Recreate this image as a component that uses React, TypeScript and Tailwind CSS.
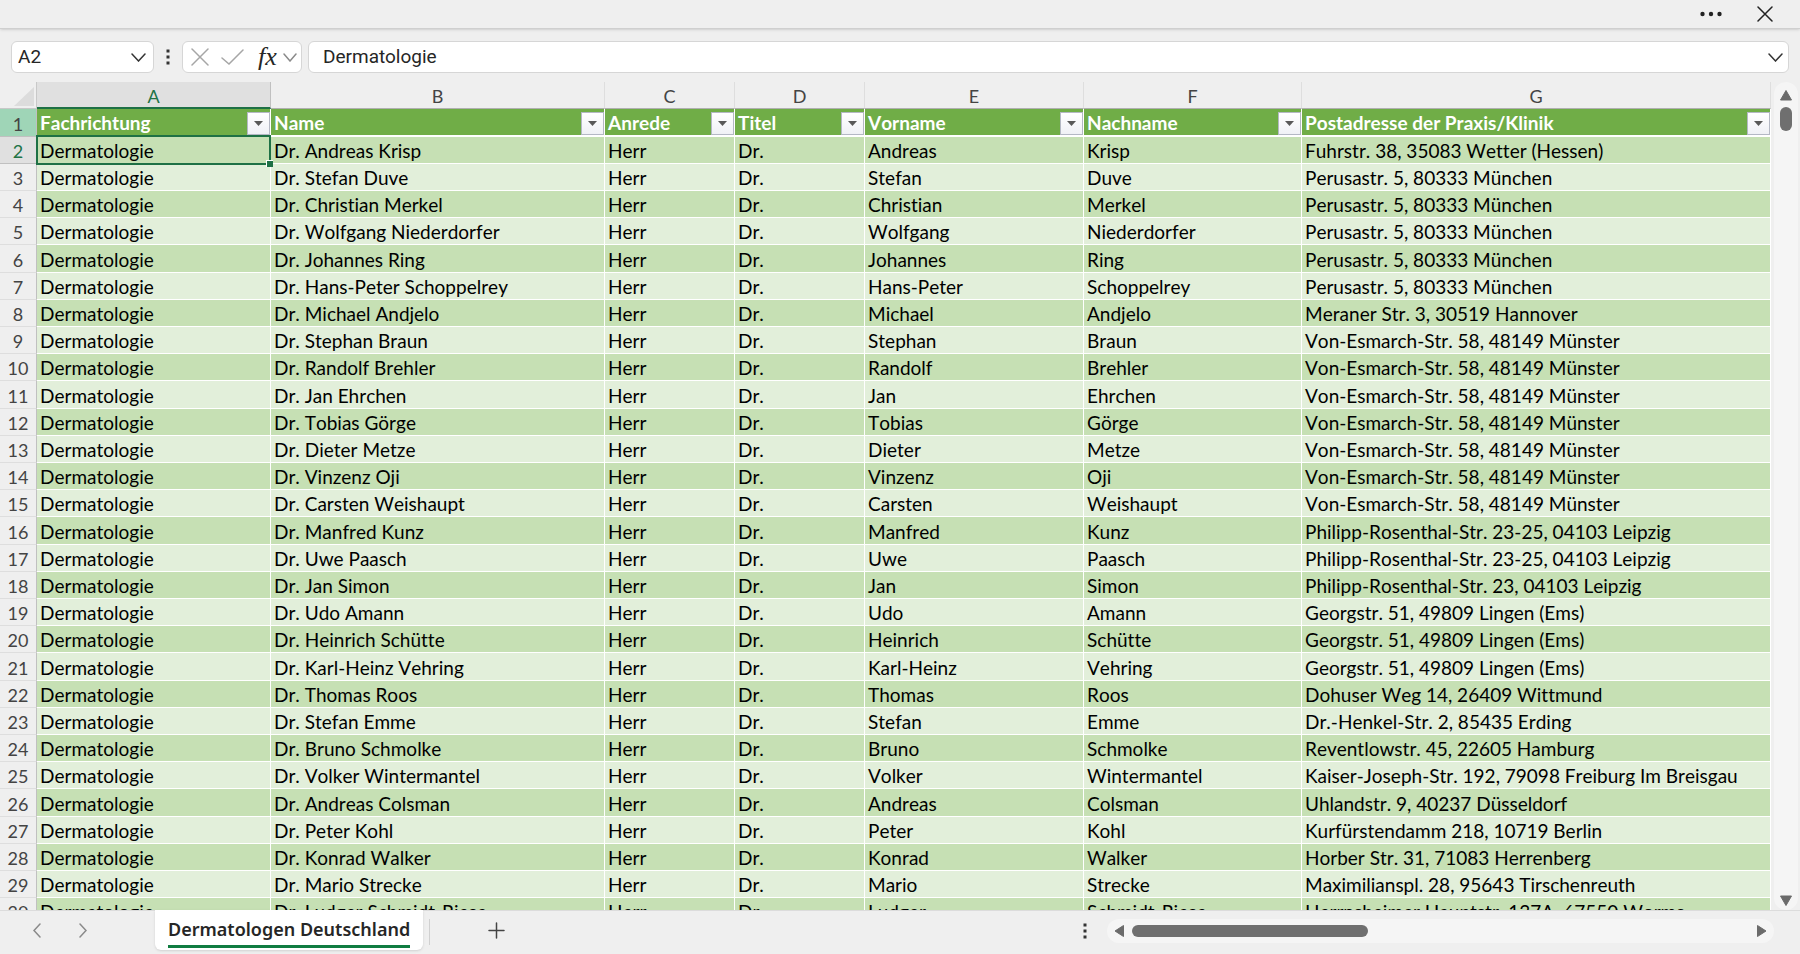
type Row = [title: string, first: string, last: string, address: string];

const HEADERS = ['Fachrichtung', 'Name', 'Anrede', 'Titel', 'Vorname', 'Nachname', 'Postadresse der Praxis/Klinik'];
const LETTERS = ['A', 'B', 'C', 'D', 'E', 'F', 'G'];

const ROWS: Row[] = [
  ['Dr.', 'Andreas', 'Krisp', 'Fuhrstr. 38, 35083 Wetter (Hessen)'],
  ['Dr.', 'Stefan', 'Duve', 'Perusastr. 5, 80333 München'],
  ['Dr.', 'Christian', 'Merkel', 'Perusastr. 5, 80333 München'],
  ['Dr.', 'Wolfgang', 'Niederdorfer', 'Perusastr. 5, 80333 München'],
  ['Dr.', 'Johannes', 'Ring', 'Perusastr. 5, 80333 München'],
  ['Dr.', 'Hans-Peter', 'Schoppelrey', 'Perusastr. 5, 80333 München'],
  ['Dr.', 'Michael', 'Andjelo', 'Meraner Str. 3, 30519 Hannover'],
  ['Dr.', 'Stephan', 'Braun', 'Von-Esmarch-Str. 58, 48149 Münster'],
  ['Dr.', 'Randolf', 'Brehler', 'Von-Esmarch-Str. 58, 48149 Münster'],
  ['Dr.', 'Jan', 'Ehrchen', 'Von-Esmarch-Str. 58, 48149 Münster'],
  ['Dr.', 'Tobias', 'Görge', 'Von-Esmarch-Str. 58, 48149 Münster'],
  ['Dr.', 'Dieter', 'Metze', 'Von-Esmarch-Str. 58, 48149 Münster'],
  ['Dr.', 'Vinzenz', 'Oji', 'Von-Esmarch-Str. 58, 48149 Münster'],
  ['Dr.', 'Carsten', 'Weishaupt', 'Von-Esmarch-Str. 58, 48149 Münster'],
  ['Dr.', 'Manfred', 'Kunz', 'Philipp-Rosenthal-Str. 23-25, 04103 Leipzig'],
  ['Dr.', 'Uwe', 'Paasch', 'Philipp-Rosenthal-Str. 23-25, 04103 Leipzig'],
  ['Dr.', 'Jan', 'Simon', 'Philipp-Rosenthal-Str. 23, 04103 Leipzig'],
  ['Dr.', 'Udo', 'Amann', 'Georgstr. 51, 49809 Lingen (Ems)'],
  ['Dr.', 'Heinrich', 'Schütte', 'Georgstr. 51, 49809 Lingen (Ems)'],
  ['Dr.', 'Karl-Heinz', 'Vehring', 'Georgstr. 51, 49809 Lingen (Ems)'],
  ['Dr.', 'Thomas', 'Roos', 'Dohuser Weg 14, 26409 Wittmund'],
  ['Dr.', 'Stefan', 'Emme', 'Dr.-Henkel-Str. 2, 85435 Erding'],
  ['Dr.', 'Bruno', 'Schmolke', 'Reventlowstr. 45, 22605 Hamburg'],
  ['Dr.', 'Volker', 'Wintermantel', 'Kaiser-Joseph-Str. 192, 79098 Freiburg Im Breisgau'],
  ['Dr.', 'Andreas', 'Colsman', 'Uhlandstr. 9, 40237 Düsseldorf'],
  ['Dr.', 'Peter', 'Kohl', 'Kurfürstendamm 218, 10719 Berlin'],
  ['Dr.', 'Konrad', 'Walker', 'Horber Str. 31, 71083 Herrenberg'],
  ['Dr.', 'Mario', 'Strecke', 'Maximilianspl. 28, 95643 Tirschenreuth'],
  ['Dr.', 'Ludger', 'Schmidt-Riese', 'Herrnsheimer Hauptstr. 137A, 67550 Worms'],
];

interface LineIconProps {
  d: string;
  w: number;
  h: number;
  color?: string;
}

const LineIcon = ({ d, w, h, color = '#333333' }: LineIconProps) => (
  <svg width={w} height={h} viewBox={`0 0 ${w} ${h}`} fill="none" stroke={color} strokeWidth="1.5" strokeLinecap="round" aria-hidden="true">
    <path d={d} />
  </svg>
);

const CHEVRON_DOWN = 'M1 1l6.5 7L14 1';

const Dots = () => (
  <svg width="4" height="16" viewBox="0 0 4 16" fill="#333333" aria-hidden="true">
    <rect x="0.5" y="0.5" width="3" height="3" />
    <rect x="0.5" y="6.5" width="3" height="3" />
    <rect x="0.5" y="12.5" width="3" height="3" />
  </svg>
);

const Triangle = ({ points }: { points: string }) => (
  <svg width="12" height="12" viewBox="0 0 12 12" aria-hidden="true">
    <polygon points={points} fill="#6b6b6b" stroke="#6b6b6b" strokeLinejoin="round" />
  </svg>
);

const TitleBar = () => (
  <header className="flex h-[29px] shrink-0 items-center justify-end gap-[35px] border-b border-[#cfcfcf] pr-[27px] shadow-sm">
    <button type="button" aria-label="More options">
      <svg width="22" height="6" viewBox="0 0 22 6" fill="#222222">
        <circle cx="2.5" cy="3" r="2.2" />
        <circle cx="11" cy="3" r="2.2" />
        <circle cx="19.5" cy="3" r="2.2" />
      </svg>
    </button>
    <button type="button" aria-label="Close">
      <LineIcon d="M1 1l14 14M15 1L1 15" w={16} h={16} color="#222222" />
    </button>
  </header>
);

const FormulaBar = () => (
  <div className="flex h-[53px] shrink-0 items-start pt-3 pr-[11px] pl-[11px] font-['Roboto',sans-serif] text-[19px] text-[#262626]">
    <div className="flex h-8 w-[143px] items-center rounded-md border border-[#d6d6d6] bg-white pr-[7px] pl-1.5">
      <input aria-label="Name box" defaultValue="A2" className="w-full min-w-0 outline-none" />
      <button type="button" aria-label="Open name list">
        <LineIcon d={CHEVRON_DOWN} w={15} h={9} />
      </button>
    </div>
    <div className="flex h-8 w-7 items-center justify-center">
      <Dots />
    </div>
    <div className="flex h-8 w-[120px] items-center rounded-md border border-[#d6d6d6] bg-white pr-1 pl-2">
      <button type="button" aria-label="Cancel">
        <LineIcon d="M1 1l16 16M17 1L1 17" w={18} h={18} color="#a6a6a6" />
      </button>
      <button type="button" aria-label="Enter" className="ml-3">
        <LineIcon d="M1 9l7 6L22 1" w={23} h={16} color="#a6a6a6" />
      </button>
      <button type="button" aria-label="Insert function" className="ml-3.5 font-['Liberation_Serif',serif] text-[26px] leading-6 italic">
        fx
      </button>
      <button type="button" aria-label="Function list" className="ml-auto">
        <LineIcon d="M1 1l6 7 6-7" w={14} h={9} color="#8a8a8a" />
      </button>
    </div>
    <div className="ml-1.5 flex h-8 flex-1 items-center rounded-md border border-[#d6d6d6] bg-white pr-[5px] pl-3.5">
      <input aria-label="Formula" defaultValue="Dermatologie" className="w-full min-w-0 outline-none" />
      <button type="button" aria-label="Expand formula bar">
        <LineIcon d={CHEVRON_DOWN} w={15} h={9} />
      </button>
    </div>
  </div>
);

const FilterButton = ({ label }: { label: string }) => (
  <button
    type="button"
    aria-label={`Filter ${label}`}
    className="flex h-[23px] w-[23px] shrink-0 items-center justify-center border border-[#b4b8c4] bg-linear-to-b from-white to-[#f0f1f6]"
  >
    <svg width="9" height="5" viewBox="0 0 9 5" fill="#595959">
      <path d="M0 0h9L4.5 5z" />
    </svg>
  </button>
);

const Sheet = () => (
  <table className="w-full table-fixed border-separate border-spacing-0 font-['Lato',sans-serif] text-[19px] leading-[22px] whitespace-nowrap text-black [font-kerning:none] [font-variant-ligatures:none]">
    <colgroup>
      <col className="w-[37px]" />
      <col className="w-[234px]" />
      <col className="w-[334px]" />
      <col className="w-[130px]" />
      <col className="w-[130px]" />
      <col className="w-[219px]" />
      <col className="w-[218px]" />
      <col />
    </colgroup>
    <thead>
      <tr className="h-[27px] text-lg leading-[22px] text-[#444444]">
        <td className="border-r border-b border-[#c8c8c8] p-0">
          <svg width="36" height="26" viewBox="0 0 36 26" className="block" aria-hidden="true">
            <path d="M34 5v19H14z" fill="#dcdcdc" />
          </svg>
        </td>
        {LETTERS.map((letter) => (
          <th
            key={letter}
            scope="col"
            className={
              letter === 'A'
                ? 'border-r border-b-2 border-r-[#c0c0c0] border-b-[#1e7145] bg-[#e0e0e0] p-0 pt-[3px] font-normal text-[#217346]'
                : 'border-r border-b border-r-[#dedede] border-b-[#b0b0b0] p-0 pt-0.5 font-normal'
            }
          >
            {letter}
          </th>
        ))}
      </tr>
      <tr className="h-[28px]">
        <th scope="row" className="border-r border-b border-[#c0c0c0] bg-[#9fd5b7] p-0 pt-0.5 text-lg leading-[22px] font-normal text-[#444444]">
          1
        </th>
        {HEADERS.map((label) => (
          <th key={label} scope="col" className="border-r border-b-2 border-white bg-[#70ad47] p-0 pt-0.5 pl-[3px] text-left font-bold text-white">
            <div className="flex items-center justify-between">
              {label}
              <FilterButton label={label} />
            </div>
          </th>
        ))}
      </tr>
    </thead>
    <tbody>
      {ROWS.map(([title, first, last, address], i) => (
        <tr key={i} className="h-[27px] odd:bg-[#c6e0b4] even:bg-[#e2efda] nth-[5n]:h-[28px]">
          <th
            scope="row"
            className={
              i === 0
                ? 'border-r border-b border-[#c0c0c0] bg-[#e0e0e0] p-0 pt-0.5 text-lg leading-[22px] font-normal text-[#217346]'
                : 'border-r border-b border-r-[#c0c0c0] border-b-[#dedede] bg-[#efefef] p-0 pt-0.5 text-lg leading-[22px] font-normal text-[#444444]'
            }
          >
            {i + 2}
          </th>
          <td className="relative border-r border-b border-white p-0 pt-0.5 pl-[3px]">
            Dermatologie
            {i === 0 && (
              <span className="absolute -inset-x-px -top-0.5 -bottom-0.5 z-10 border-2 border-[#1e7145]">
                <span className="absolute -right-1 -bottom-1 h-[7px] w-[7px] border-t border-l border-white bg-[#1e7145]" />
              </span>
            )}
          </td>
          {[`Dr. ${first} ${last}`, 'Herr', title, first, last, address].map((text, c) => (
            <td key={c} className="border-r border-b border-white p-0 pt-0.5 pl-[3px]">
              {text}
            </td>
          ))}
        </tr>
      ))}
    </tbody>
  </table>
);

const VerticalScroll = () => (
  <div className="flex w-[29px] shrink-0 justify-center pl-px">
    <div className="flex w-6 flex-col items-center rounded-xl bg-[#f5f5f5] pt-[7px] pb-1">
      <button type="button" aria-label="Scroll up">
        <Triangle points="6,1.5 11.5,11 0.5,11" />
      </button>
      <div className="mt-1.5 h-6 w-3 rounded-full bg-[#6f6f6f]" />
      <button type="button" aria-label="Scroll down" className="mt-auto">
        <Triangle points="0.5,2 11.5,2 6,11.5" />
      </button>
    </div>
  </div>
);

const TabBar = () => (
  <footer className="flex h-11 shrink-0 border-t border-[#dcdcdc] pr-[26px]">
    <div className="flex w-[155px] items-center gap-[38px] pb-1 pl-[33px]">
      <button type="button" aria-label="Previous sheet">
        <LineIcon d="M7 1L1 7.5 7 14" w={8} h={15} color="#8a8a8a" />
      </button>
      <button type="button" aria-label="Next sheet">
        <LineIcon d="M1 1l6 6.5L1 14" w={8} h={15} color="#8a8a8a" />
      </button>
    </div>
    <button
      type="button"
      className="-mt-px h-10 rounded-b-md bg-white px-[13px] pt-1 font-['Noto_Sans',sans-serif] text-lg leading-6 font-semibold text-[#262626] shadow-sm"
    >
      <span className="block border-b-[3px] border-[#107c41] pb-1">Dermatologen Deutschland</span>
    </button>
    <div className="mt-2 ml-1.5 h-[26px] w-px bg-[#d0d0d0]" />
    <button type="button" aria-label="New sheet" className="ml-[58px] pb-1">
      <LineIcon d="M8.5 1v15M1 8.5h15" w={17} h={17} color="#444444" />
    </button>
    <div className="ml-auto flex items-center pb-1">
      <Dots />
      <div className="ml-5 flex h-6 w-[667px] items-center rounded-xl bg-[#f5f5f5] px-1.5">
        <button type="button" aria-label="Scroll left">
          <Triangle points="2,6 10.5,0.5 10.5,11.5" />
        </button>
        <div className="ml-[7px] h-3 w-[236px] rounded-full bg-[#6f6f6f]" />
        <button type="button" aria-label="Scroll right" className="ml-auto">
          <Triangle points="10,6 1.5,0.5 1.5,11.5" />
        </button>
      </div>
    </div>
  </footer>
);

const App = () => (
  <div className="flex h-screen flex-col overflow-hidden bg-[#efefef]">
    <TitleBar />
    <FormulaBar />
    <main className="flex min-h-0 flex-1">
      <div className="min-w-0 flex-1 overflow-hidden">
        <Sheet />
      </div>
      <VerticalScroll />
    </main>
    <TabBar />
  </div>
);

export default App;
